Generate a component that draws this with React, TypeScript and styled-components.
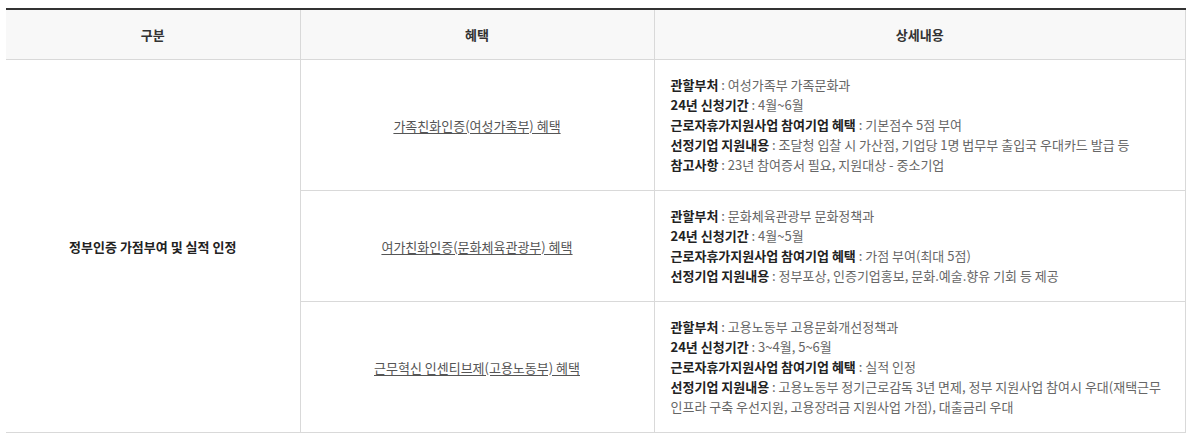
import { createGlobalStyle, styled } from 'styled-components'

const GlobalStyle = createGlobalStyle`
  body {
    margin: 0;
    padding: 8px 6px;
    background: #fff;
    font-family: 'Noto Sans CJK KR', 'Noto Sans', sans-serif;
    color: #333;
  }
`

type Detail = { label: string; text: string }
type Benefit = { title: string; details: Detail[] }

const benefits: Benefit[] = [
  {
    title: '가족친화인증(여성가족부) 혜택',
    details: [
      { label: '관할부처', text: '여성가족부 가족문화과' },
      { label: '24년 신청기간', text: '4월~6월' },
      { label: '근로자휴가지원사업 참여기업 혜택', text: '기본점수 5점 부여' },
      {
        label: '선정기업 지원내용',
        text: '조달청 입찰 시 가산점, 기업당 1명 법무부 출입국 우대카드 발급 등',
      },
      { label: '참고사항', text: '23년 참여증서 필요, 지원대상 - 중소기업' },
    ],
  },
  {
    title: '여가친화인증(문화체육관광부) 혜택',
    details: [
      { label: '관할부처', text: '문화체육관광부 문화정책과' },
      { label: '24년 신청기간', text: '4월~5월' },
      { label: '근로자휴가지원사업 참여기업 혜택', text: '가점 부여(최대 5점)' },
      {
        label: '선정기업 지원내용',
        text: '정부포상, 인증기업홍보, 문화.예술.향유 기회 등 제공',
      },
    ],
  },
  {
    title: '근무혁신 인센티브제(고용노동부) 혜택',
    details: [
      { label: '관할부처', text: '고용노동부 고용문화개선정책과' },
      { label: '24년 신청기간', text: '3~4월, 5~6월' },
      { label: '근로자휴가지원사업 참여기업 혜택', text: '실적 인정' },
      {
        label: '선정기업 지원내용',
        text: '고용노동부 정기근로감독 3년 면제, 정부 지원사업 참여시 우대(재택근무 인프라 구축 우선지원, 고용장려금 지원사업 가점), 대출금리 우대',
      },
    ],
  },
]

const App = () => {
  return (
    <>
      <GlobalStyle />
      <Table>
        <colgroup>
          <col style={{ width: 294 }} />
          <col style={{ width: 354 }} />
          <col />
        </colgroup>
        <thead>
          <tr>
            <HeadCell>구분</HeadCell>
            <HeadCell>혜택</HeadCell>
            <HeadCell>상세내용</HeadCell>
          </tr>
        </thead>
        <tbody>
          {benefits.map((b, i) => (
            <tr key={b.title}>
              {i === 0 && (
                <GroupCell rowSpan={benefits.length}>
                  정부인증 가점부여 및 실적 인정
                </GroupCell>
              )}
              <BenefitCell>
                <BenefitLink href="#">{b.title}</BenefitLink>
              </BenefitCell>
              <DetailCell>
                {b.details.map((d) => (
                  <Line key={d.label}>
                    <Label>{d.label}</Label> : {d.text}
                  </Line>
                ))}
              </DetailCell>
            </tr>
          ))}
        </tbody>
      </Table>
    </>
  )
}

const Table = styled.table`
  width: 1180px;
  border-collapse: collapse;
  table-layout: fixed;
  border-top: 2px solid #333;
  font-size: 13px;
`
const HeadCell = styled.th`
  height: 49px;
  padding: 0;
  background: #f8f8f8;
  border-bottom: 1px solid #d9d9d9;
  border-right: 1px solid #d9d9d9;
  font-size: 13px;
  font-weight: 700;
  color: #333;
  text-align: center;
  vertical-align: middle;
`
const GroupCell = styled.td`
  padding: 0 10px;
  border-bottom: 1px solid #d9d9d9;
  border-right: 1px solid #d9d9d9;
  text-align: center;
  vertical-align: middle;
  font-weight: 700;
  color: #222;
`
const BenefitCell = styled.td`
  padding: 0 10px;
  border-bottom: 1px solid #d9d9d9;
  border-right: 1px solid #d9d9d9;
  text-align: center;
  vertical-align: middle;
`
const BenefitLink = styled.a`
  color: #555;
  text-decoration: underline;
  text-underline-offset: 2px;
`
const DetailCell = styled.td`
  padding: 15px 15px 15px 16px;
  border-bottom: 1px solid #d9d9d9;
  border-right: 1px solid #d9d9d9;
  vertical-align: middle;
  color: #666;
  line-height: 20px;
  word-break: keep-all;
`
const Line = styled.div`
  line-height: 20px;
`
const Label = styled.strong`
  font-weight: 700;
  color: #222;
`

export default App
